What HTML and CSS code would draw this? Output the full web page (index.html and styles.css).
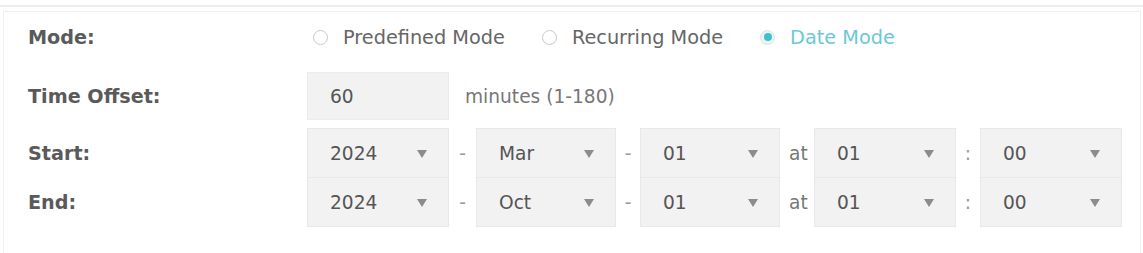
FILE: index.html
```html
<!DOCTYPE html>
<html>
<head>
<meta charset="utf-8">
<link rel="stylesheet" href="styles.css">
</head>
<body>
<div class="topline"></div>
<div class="panel">
  <div class="row mode-row">
    <div class="label">Mode:</div>
    <div class="field radios">
      <label class="radio"><span class="circle"></span><span class="rtext">Predefined Mode</span></label>
      <label class="radio"><span class="circle"></span><span class="rtext">Recurring Mode</span></label>
      <label class="radio checked"><span class="circle"><span class="dot"></span></span><span class="rtext">Date Mode</span></label>
    </div>
  </div>
  <div class="row offset-row">
    <div class="label">Time Offset:</div>
    <div class="field">
      <div class="input">60</div>
      <span class="hint">minutes (1-180)</span>
    </div>
  </div>
  <div class="row date-row start-row">
    <div class="label">Start:</div>
    <div class="field">
      <div class="select">2024<span class="arrow"></span></div>
      <span class="sep s27">-</span>
      <div class="select w140">Mar<span class="arrow"></span></div>
      <span class="sep s24">-</span>
      <div class="select w140">01<span class="arrow"></span></div>
      <span class="sep at">at</span>
      <div class="select">01<span class="arrow"></span></div>
      <span class="sep s24">:</span>
      <div class="select">00<span class="arrow"></span></div>
    </div>
  </div>
  <div class="row date-row end-row">
    <div class="label">End:</div>
    <div class="field">
      <div class="select">2024<span class="arrow"></span></div>
      <span class="sep s27">-</span>
      <div class="select w140">Oct<span class="arrow"></span></div>
      <span class="sep s24">-</span>
      <div class="select w140">01<span class="arrow"></span></div>
      <span class="sep at">at</span>
      <div class="select">01<span class="arrow"></span></div>
      <span class="sep s24">:</span>
      <div class="select">00<span class="arrow"></span></div>
    </div>
  </div>
</div>
</body>
</html>
```
FILE: styles.css
```css
html, body {
  margin: 0;
  padding: 0;
  background: #fff;
}
body {
  font-family: "DejaVu Sans", Verdana, sans-serif;
  font-size: 18.6px;
  color: #666;
  width: 1143px;
  height: 253px;
  overflow: hidden;
}
.topline {
  height: 2px;
  margin-top: 5px;
  background: #ededed;
}
.panel {
  margin: 4px 0 0 3px;
  width: 1136px;
  height: 241px;
  border: 1px solid #efefef;
  border-bottom: none;
}
.row {
  display: flex;
  align-items: center;
}
.label {
  width: 279px;
  padding-left: 24px;
  font-weight: bold;
  font-size: 19.2px;
  color: #5a5a5a;
}
.field {
  display: flex;
  align-items: center;
}
.mode-row {
  height: 50px;
}
.radios {
  padding-left: 6px;
}
.radio {
  display: flex;
  align-items: center;
  margin-right: 37px;
  font-size: 19.3px;
}
.circle {
  width: 13px;
  height: 13px;
  border: 1px solid #c9c9c9;
  border-radius: 50%;
  margin-right: 15px;
  display: flex;
  align-items: center;
  justify-content: center;
  background: #fff;
}
.checked .circle {
  border-color: #d3e8ea;
  background: #e8f4f5;
}
.dot {
  width: 8px;
  height: 8px;
  border-radius: 50%;
  background: #3fc0cb;
}
.rtext {
  color: #666;
}
.checked .rtext {
  color: #6bc9d2;
}
.offset-row {
  margin-top: 10px;
}
.input {
  box-sizing: border-box;
  width: 142px;
  height: 48px;
  background: #f2f2f2;
  border: 1px solid #ececec;
  padding-left: 22px;
  display: flex;
  align-items: center;
  color: #555;
}
.hint {
  margin-left: 16px;
  color: #777;
}
.start-row {
  margin-top: 8px;
}
.end-row {
  margin-top: -1px;
}
.select {
  position: relative;
  box-sizing: border-box;
  width: 142px;
  height: 50px;
  background: #f2f2f2;
  border: 1px solid #e8e8e8;
  padding-left: 22px;
  display: flex;
  align-items: center;
  color: #555;
}
.select.w140 {
  width: 140px;
}
.arrow {
  position: absolute;
  right: 21px;
  top: 21px;
  width: 0;
  height: 0;
  border-left: 5px solid transparent;
  border-right: 5px solid transparent;
  border-top: 8px solid #8c8c8c;
}
.sep {
  text-align: center;
  color: #9a9a9a;
}
.s27 { width: 27px; }
.s24 { width: 24px; }
.at {
  width: 34px;
  color: #777;
  text-align: left;
  padding-left: 9px;
  box-sizing: border-box;
}
```
